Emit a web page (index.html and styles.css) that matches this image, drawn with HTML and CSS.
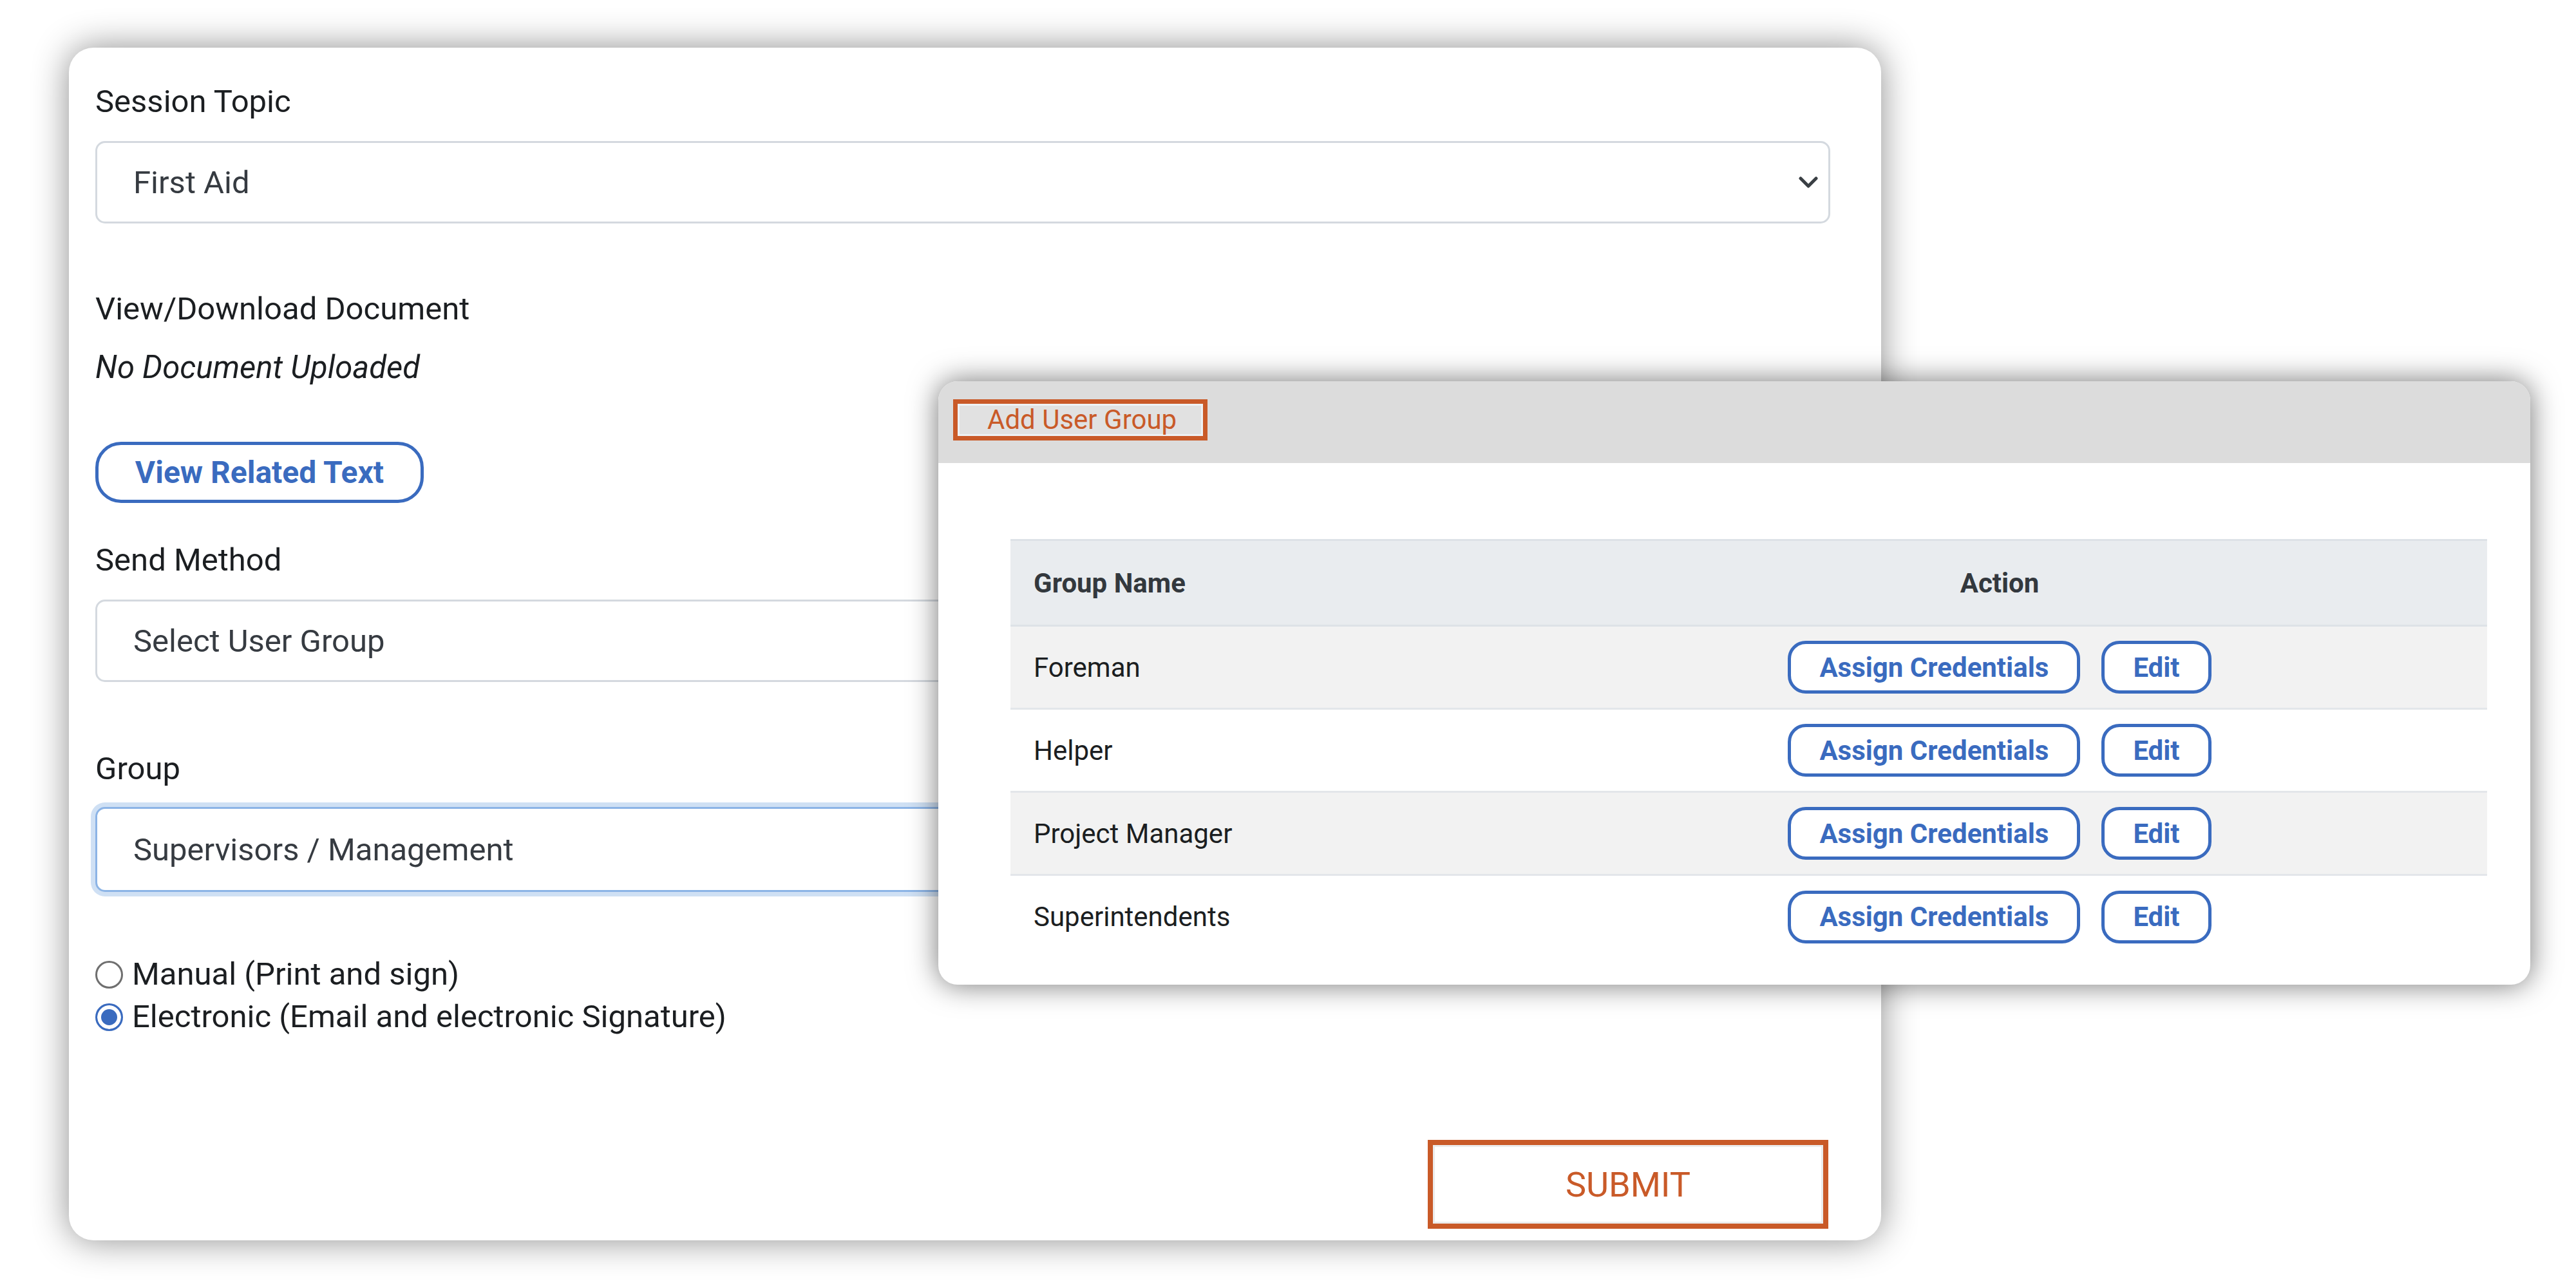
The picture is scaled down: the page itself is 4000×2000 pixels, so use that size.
FILE: index.html
```html
<!DOCTYPE html>
<html lang="en">
<head>
<meta charset="utf-8">
<title>Session</title>
<link rel="stylesheet" href="styles.css">
</head>
<body>
<div class="page">
  <div class="card">
    <div class="lbl lbl-top">Session Topic</div>
    <div class="select">
      <span>First Aid</span>
      <svg class="chev" viewBox="0 0 30 18" width="30" height="18"><path d="M3 3 L15 15 L27 3" fill="none" stroke="#3a3f44" stroke-width="5" stroke-linecap="round" stroke-linejoin="round"/></svg>
    </div>
    <div class="lbl gap-97">View/Download Document</div>
    <div class="lbl gap-19 italic">No Document Uploaded</div>
    <button class="btn-blue btn-related">View Related Text</button>
    <div class="lbl gap-53">Send Method</div>
    <div class="select">
      <span>Select User Group</span>
      <svg class="chev" viewBox="0 0 30 18" width="30" height="18"><path d="M3 3 L15 15 L27 3" fill="none" stroke="#3a3f44" stroke-width="5" stroke-linecap="round" stroke-linejoin="round"/></svg>
    </div>
    <div class="lbl gap-99">Group</div>
    <div class="select select-focus">
      <span>Supervisors / Management</span>
      <svg class="chev" viewBox="0 0 30 18" width="30" height="18"><path d="M3 3 L15 15 L27 3" fill="none" stroke="#3a3f44" stroke-width="5" stroke-linecap="round" stroke-linejoin="round"/></svg>
    </div>
    <div class="radios">
      <div class="radio-row"><span class="radio"></span><span>Manual (Print and sign)</span></div>
      <div class="radio-row"><span class="radio radio-on"></span><span>Electronic (Email and electronic Signature)</span></div>
    </div>
    <button class="btn-submit">SUBMIT</button>
  </div>

  <div class="modal">
    <div class="modal-head">
      <button class="btn-add">Add User Group</button>
    </div>
    <div class="modal-body">
      <table class="grid">
        <thead>
          <tr><th class="col-name">Group Name</th><th class="col-action">Action</th></tr>
        </thead>
        <tbody>
          <tr class="odd"><td>Foreman</td><td class="act"><div class="acts"><button class="btn-blue btn-sm">Assign Credentials</button><button class="btn-blue btn-sm">Edit</button></div></td></tr>
          <tr><td>Helper</td><td class="act"><div class="acts"><button class="btn-blue btn-sm">Assign Credentials</button><button class="btn-blue btn-sm">Edit</button></div></td></tr>
          <tr class="odd"><td>Project Manager</td><td class="act"><div class="acts"><button class="btn-blue btn-sm">Assign Credentials</button><button class="btn-blue btn-sm">Edit</button></div></td></tr>
          <tr><td>Superintendents</td><td class="act"><div class="acts"><button class="btn-blue btn-sm">Assign Credentials</button><button class="btn-blue btn-sm">Edit</button></div></td></tr>
        </tbody>
      </table>
    </div>
  </div>
</div>
</body>
</html>
```
FILE: styles.css
```css
html, body {
  margin: 0;
  background: #ffffff;
}
body {
  font-family: Roboto, "Liberation Sans", sans-serif;
  color: #212529;
}
button {
  font: inherit;
  cursor: pointer;
}
.page {
  position: relative;
  width: 4000px;
  height: 2000px;
  box-sizing: border-box;
  padding: 74px 0 0 107px;
}
.card {
  width: 2814px;
  box-sizing: border-box;
  padding: 48px 79px 18px 41px;
  background: #ffffff;
  border-radius: 38px;
  box-shadow: 0 0 55px rgba(0, 0, 0, 0.45);
  display: flex;
  flex-direction: column;
}
.lbl {
  font-size: 49px;
  line-height: 72px;
  color: #1b1e21;
}
.italic { font-style: italic; }
.gap-97 { margin-top: 97px; }
.gap-19 { margin-top: 19px; }
.gap-53 { margin-top: 53px; }
.gap-99 { margin-top: 99px; }

.select {
  margin-top: 25px;
  height: 128px;
  box-sizing: border-box;
  border: 3px solid #d4d9df;
  border-radius: 15px;
  display: flex;
  align-items: center;
  justify-content: space-between;
  padding: 0 16px 0 56px;
  font-size: 49px;
  color: #363b41;
  background: #ffffff;
}
.select-focus {
  margin-top: 23px;
  height: 132px;
  border: 3px solid #8cb4e6;
  box-shadow: 0 0 0 7px #cfe0f4;
}
.chev { display: block; }

.btn-blue {
  background: #ffffff;
  border: 5px solid #3a6bbf;
  color: #3a6bbf;
  font-weight: 700;
  box-sizing: border-box;
}
.btn-related {
  align-self: flex-start;
  margin-top: 79px;
  height: 95px;
  width: 510px;
  border-radius: 40px;
  font-size: 48px;
  padding: 0;
}

.radios {
  margin-top: 95px;
  display: flex;
  flex-direction: column;
}
.radio-row {
  display: flex;
  align-items: center;
  font-size: 49px;
  line-height: 66px;
  color: #1b1e21;
}
.radio {
  width: 43px;
  height: 43px;
  box-sizing: border-box;
  border-radius: 50%;
  border: 3px solid #6f6f6f;
  margin-right: 14px;
  background: #ffffff;
}
.radio-on {
  border: 3px solid #3a6bbf;
  background: #3a6bbf;
  box-shadow: inset 0 0 0 6px #ffffff;
}

.btn-submit {
  align-self: flex-end;
  margin-top: 158px;
  margin-right: 3px;
  width: 622px;
  height: 138px;
  box-sizing: border-box;
  border: 8px solid #c95a28;
  box-shadow: inset 0 0 0 3px #ececec;
  background: #ffffff;
  color: #c95a28;
  font-size: 54px;
  padding: 0;
}

.modal {
  position: absolute;
  left: 1457px;
  top: 592px;
  width: 2472px;
  background: #ffffff;
  border-radius: 30px;
  overflow: hidden;
  box-shadow: 0 0 45px rgba(0, 0, 0, 0.55);
}
.modal-head {
  height: 127px;
  box-sizing: border-box;
  background: #dcdcdc;
  padding: 28px 0 0 23px;
}
.btn-add {
  display: block;
  height: 64px;
  width: 395px;
  box-sizing: border-box;
  border: 7px solid #c95a28;
  box-shadow: inset 0 0 0 3px #eef1f4;
  background: #e1e1e1;
  color: #c95a28;
  font-size: 42px;
  line-height: 48px;
  text-align: left;
  padding: 0 0 0 46px;
}
.modal-body {
  padding: 118px 67px 41px 112px;
}
.grid {
  width: 100%;
  border-collapse: collapse;
  table-layout: fixed;
  font-size: 42px;
  color: #1b1e21;
}
.grid th {
  height: 130px;
  background: #e9ecef;
  border-top: 3px solid #dde2e7;
  border-bottom: 3px solid #dde2e7;
  font-weight: 700;
  color: #33383d;
  padding: 0;
}
.grid th.col-name {
  width: 743px;
  text-align: left;
  padding-left: 36px;
}
.col-action { text-align: center; }
.grid td {
  height: 129px;
  padding: 0 0 0 36px;
  border-bottom: 3px solid #e3e6ea;
  box-sizing: border-box;
}
.grid td.act {
  padding: 0;
}
.grid tr:last-child td { border-bottom: none; }
.grid tr.odd td { background: #f2f2f2; }
.acts {
  display: flex;
  justify-content: center;
  gap: 33px;
}
.btn-sm {
  height: 82px;
  border-radius: 28px;
  font-size: 42px;
  padding: 0 44px;
}
```
